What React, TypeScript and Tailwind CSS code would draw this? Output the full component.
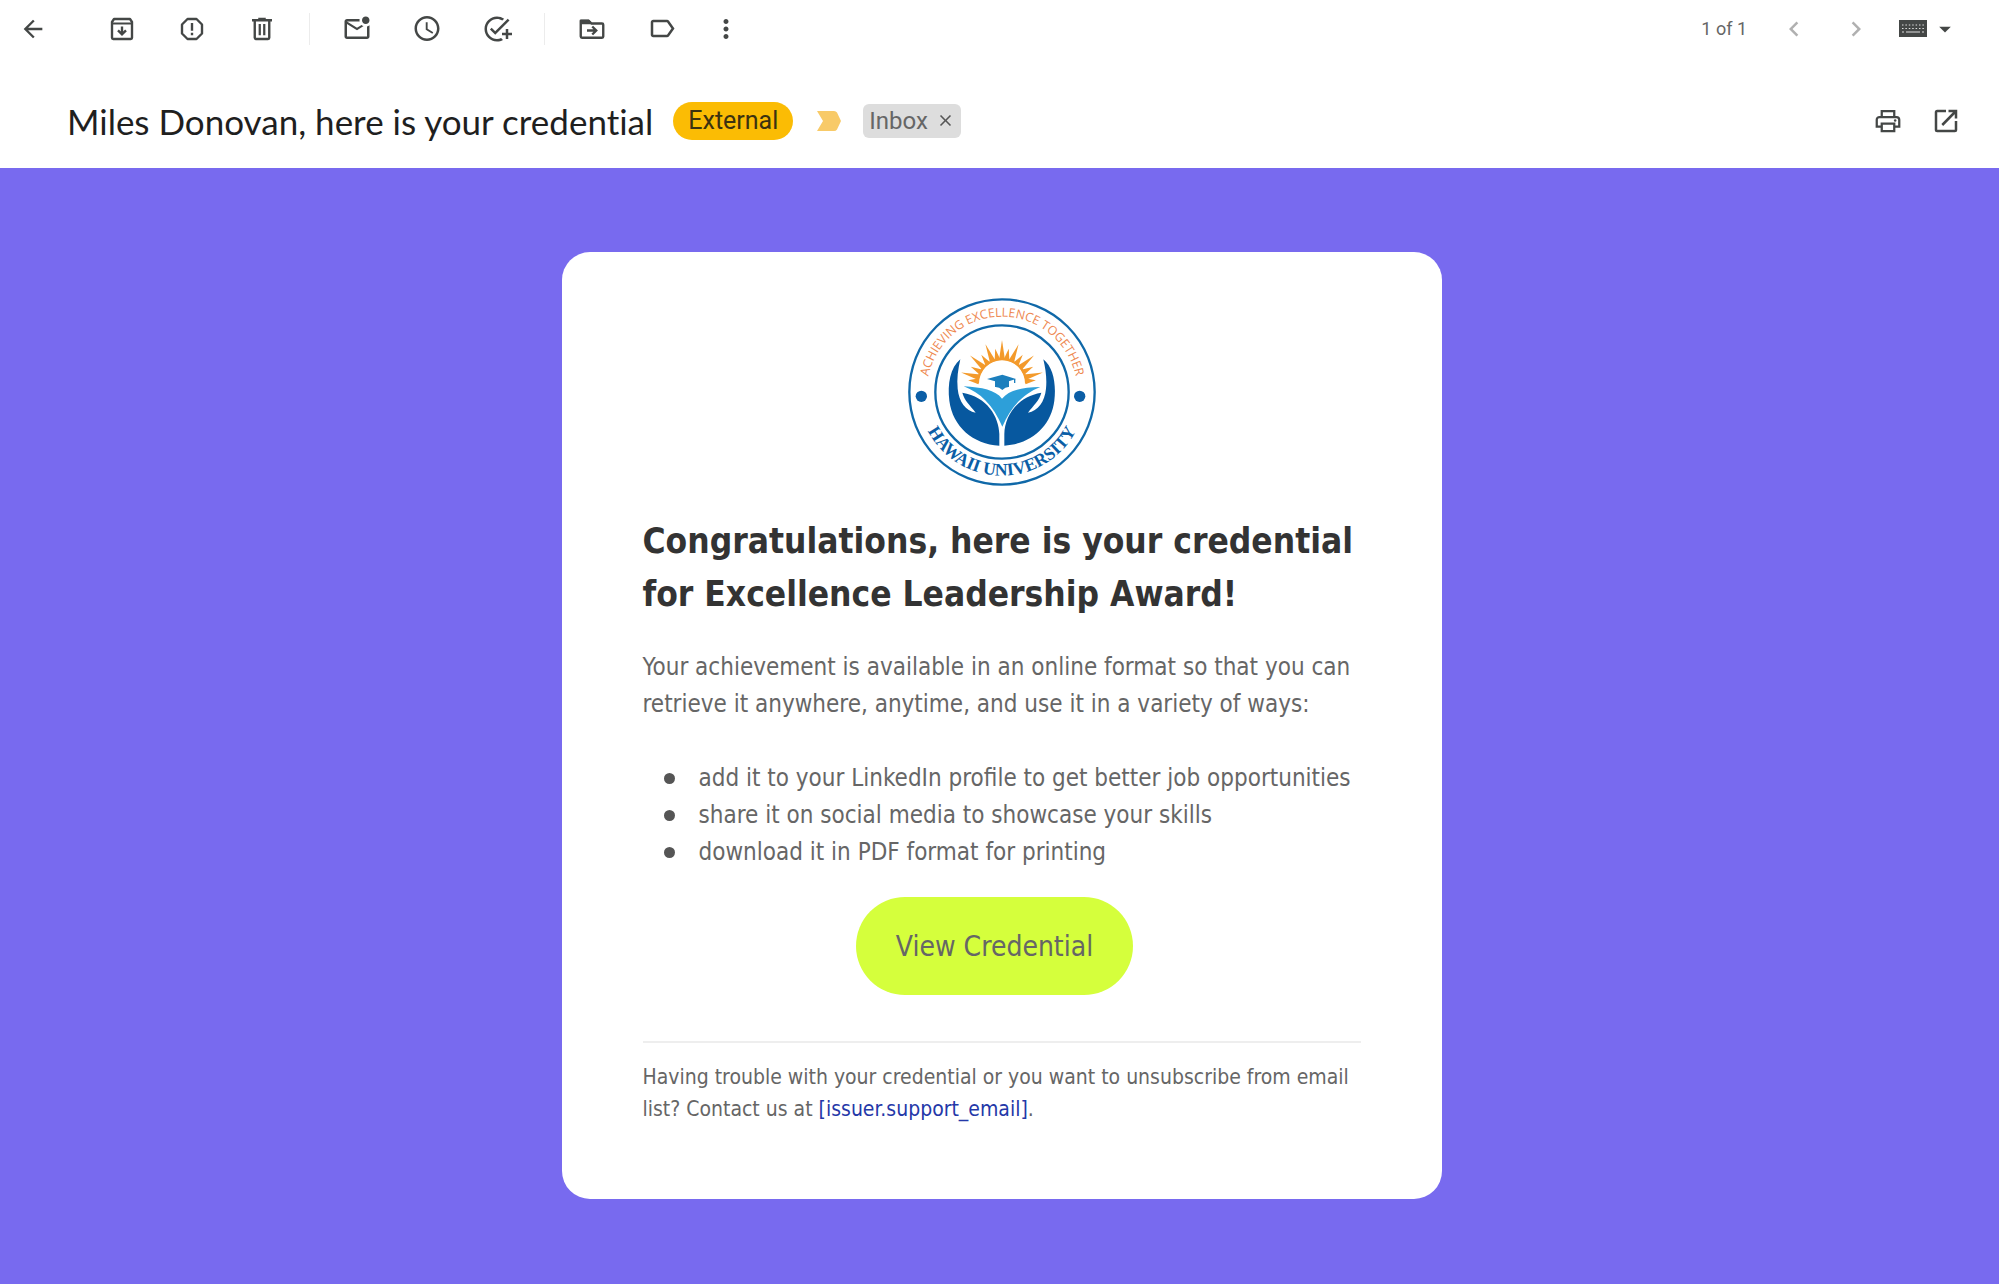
import type { ReactNode } from "react";
import {
  MdAccessTime,
  MdArrowBack,
  MdArrowDropDown,
  MdChevronLeft,
  MdChevronRight,
  MdClose,
  MdLabelOutline,
  MdMoreVert,
  MdOutlineAddTask,
  MdOutlineMarkEmailUnread,
} from "react-icons/md";

const IconButton = ({ label, children }: { label: string; children: ReactNode }) => (
  <button type="button" aria-label={label} className="flex size-[30px] items-center justify-center">
    {children}
  </button>
);

const Divider = () => <div className="mx-8 h-8 w-px bg-[#ececec]" />;

const ArchiveIcon = () => (
  <svg viewBox="0 0 24 24" className="size-[30px]" fill="none" stroke="currentColor" strokeWidth="1.9">
    <path d="M4 6.4 5.6 4h12.8L20 6.4V19a1 1 0 0 1-1 1H5a1 1 0 0 1-1-1Z" strokeLinejoin="round" />
    <path d="M4 7.6h16" strokeWidth="1.6" />
    <path d="M12 10v6M8.8 13.1l3.2 3.2 3.2-3.2" />
  </svg>
);

const SpamIcon = () => (
  <svg viewBox="0 0 24 24" className="size-[30px]" fill="none" stroke="currentColor" strokeWidth="1.9">
    <path d="M8.4 4h7.2L20 8.4v7.2L15.6 20H8.4L4 15.6V8.4Z" strokeLinejoin="round" />
    <path d="M12 7.2v6.2M12 15v2" />
  </svg>
);

const TrashIcon = () => (
  <svg viewBox="0 0 24 24" className="size-[30px]" fill="none" stroke="currentColor" strokeWidth="1.9">
    <path d="M6.2 5.2V19a1 1 0 0 0 1 1h9.6a1 1 0 0 0 1-1V5.2" />
    <path d="M4 5h16M9 3.9h6" />
    <path d="M10.2 8v9M13.8 8v9" strokeWidth="1.8" />
  </svg>
);

const MoveIcon = () => (
  <svg viewBox="0 0 24 24" className="size-[30px]" fill="none" stroke="currentColor" strokeWidth="1.9">
    <path d="M3 5.4h6.4l2.2 2.2H20a1 1 0 0 1 1 1V18a1 1 0 0 1-1 1H4a1 1 0 0 1-1-1Z" strokeLinejoin="round" />
    <path d="M3 4.6h6.6L12.4 8.2H3Z" fill="currentColor" stroke="none" />
    <path d="M8 13.2h7M12.2 10l3.2 3.2-3.2 3.2" />
  </svg>
);

const KeyboardIcon = () => (
  <svg viewBox="0 0 28 17" className="h-[17px] w-7" fill="currentColor">
    <path d="M0 0h28v17H0Z" />
    <g stroke="#ddd" strokeWidth="1.2" fill="none">
      <path d="M3 5h22M3 8.5h22" strokeDasharray="1.5 1.9" />
      <path d="M3 12h2M7 12h14M23 12h2" />
    </g>
  </svg>
);

const PrintIcon = () => (
  <svg viewBox="0 0 24 24" className="size-[30px]" fill="none" stroke="currentColor" strokeWidth="1.8">
    <path d="M7 16.5H3V11a2.2 2.2 0 0 1 2.2-2.2h13.6A2.2 2.2 0 0 1 21 11v5.5h-4" />
    <path d="M7 8.8V4h10v4.8M7 14h10v6H7Z" />
    <circle cx="17.7" cy="11.6" r="1" fill="currentColor" stroke="none" />
  </svg>
);

const OpenIcon = () => (
  <svg viewBox="0 0 24 24" className="size-[30px]" fill="none" stroke="currentColor" strokeWidth="2">
    <path d="M12 4H5a1 1 0 0 0-1 1v14a1 1 0 0 0 1 1h14a1 1 0 0 0 1-1v-7" />
    <path d="M14 4h6v6M20 4 9 15.2" />
  </svg>
);

// angle from vertical, tip radius
const rays = [
  [-85, 102], [-75, 127], [-62, 106], [-49, 127], [-36, 106], [-23, 127], [-11, 106],
  [0, 130],
  [11, 106], [23, 127], [36, 106], [49, 127], [62, 106], [75, 127], [85, 102],
];

const Hand = () => (
  <path d="M210 238C180 262 171 312 177 362C187 440 248 492 327 497L327 462C326 410 290 350 216 338C222 362 240 376 256 398C226 392 206 366 202 326C199 296 203 268 210 238Z" />
);

const Logo = () => (
  <svg viewBox="53 54 564 564" className="size-[188px]" role="img" aria-label="Hawaii University">
    <defs>
      <path id="motto" d="M109 336A226 226 0 0 1 561 336" />
      <path id="name" d="M84 336A251 251 0 0 0 586 336" />
    </defs>
    <g fill="none" stroke="#0f68a8">
      <circle cx="335" cy="336" r="278" strokeWidth="7" />
      <circle cx="335" cy="336" r="200" strokeWidth="7" />
    </g>
    <g fill="#0b5ea6">
      <circle cx="93" cy="349" r="17" />
      <circle cx="568" cy="349" r="17" />
    </g>
    <g fill="#f39a2b">
      {rays.map(([angle, tip]) => (
        <path key={angle} d={`M-9 -70L0 -${tip}L9 -70Z`} transform={`translate(335 310) rotate(${angle})`} />
      ))}
      <path d="M259 310A76 76 0 0 1 411 310H404A69 69 0 0 0 266 310Z" />
    </g>
    <path d="M220 319C275 322 315 330 335 356C355 330 395 322 450 321C402 340 365 375 336 440C308 375 270 338 220 319Z" fill="#2d9fd9" />
    <g fill="#1c7fbd">
      <path d="M290 297L336 284L377 297L336 310Z" />
      <path d="M314 300H356V321Q346 320 336 330Q326 320 314 321Z" />
      <path d="M371 297h4v12h-4Z" />
    </g>
    <g fill="#07589f">
      <Hand />
      <g transform="translate(669 0) scale(-1 1)">
        <Hand />
      </g>
    </g>
    <text className="fill-[#ee8850] font-['Open_Sans',sans-serif] text-[37px]" textAnchor="middle">
      <textPath href="#motto" startOffset="50%">ACHIEVING EXCELLENCE TOGETHER</textPath>
    </text>
    <text className="fill-[#0b5ea6] font-['Liberation_Serif',serif] text-[53px] font-bold" textAnchor="middle">
      <textPath href="#name" startOffset="50%">HAWAII UNIVERSITY</textPath>
    </text>
  </svg>
);

const Toolbar = () => (
  <div className="flex h-[57px] items-center justify-between pr-10 pl-[18px] text-[#444746]">
    <div className="flex items-center">
      <IconButton label="Back"><MdArrowBack size={28} /></IconButton>
      <div className="ml-[59px] flex items-center gap-10">
        <IconButton label="Archive"><ArchiveIcon /></IconButton>
        <IconButton label="Report spam"><SpamIcon /></IconButton>
        <IconButton label="Delete"><TrashIcon /></IconButton>
      </div>
      <Divider />
      <div className="flex items-center gap-10">
        <IconButton label="Mark as unread"><MdOutlineMarkEmailUnread size={30} /></IconButton>
        <IconButton label="Snooze"><MdAccessTime size={31} /></IconButton>
        <IconButton label="Add to tasks"><MdOutlineAddTask size={30} /></IconButton>
      </div>
      <Divider />
      <div className="flex items-center gap-10">
        <IconButton label="Move to"><MoveIcon /></IconButton>
        <IconButton label="Labels"><MdLabelOutline size={31} /></IconButton>
      </div>
      <div className="ml-[34px]">
        <IconButton label="More"><MdMoreVert size={30} /></IconButton>
      </div>
    </div>
    <div className="flex items-center">
      <span className="mr-8 font-[Roboto,sans-serif] text-lg text-[#666]">1 of 1</span>
      <div className="mr-7 flex gap-8 text-[#b0b0b0]">
        <IconButton label="Newer"><MdChevronLeft size={30} /></IconButton>
        <IconButton label="Older"><MdChevronRight size={30} /></IconButton>
      </div>
      <button type="button" aria-label="Input tools" className="flex items-center gap-1">
        <KeyboardIcon />
        <MdArrowDropDown size={28} />
      </button>
    </div>
  </div>
);

const SubjectBar = () => (
  <div className="flex h-[111px] items-center justify-between pt-4 pr-[38px] pl-[67px]">
    <div className="flex items-center">
      <h1 className="font-[Lato,sans-serif] text-[35px] leading-10 text-[#1f1f1f] [font-variant-ligatures:none]">
        Miles Donovan, here is your credential
      </h1>
      <span className="ml-5 rounded-full bg-[#fbbc04] px-[15px] font-[Roboto,sans-serif] text-[25px] leading-[38px] text-[#3c3210]">
        External
      </span>
      <svg viewBox="0 0 24 20" className="ml-6 h-5 w-6" fill="#f8ca68" role="img" aria-label="Important">
        <path d="M0 0h17q2 0 3 1.5L24 10l-4 8.5q-1 1.5-3 1.5H0l6-10Z" />
      </svg>
      <span className="ml-[22px] flex items-center gap-2 rounded-md bg-[#ddd] px-1.5 font-[Roboto,sans-serif] text-2xl leading-[34px] text-[#666]">
        Inbox
        <button type="button" aria-label="Remove label Inbox" className="text-[#555]">
          <MdClose size={19} />
        </button>
      </span>
    </div>
    <div className="flex gap-7 text-[#444746]">
      <IconButton label="Print"><PrintIcon /></IconButton>
      <IconButton label="Open in new window"><OpenIcon /></IconButton>
    </div>
  </div>
);

const perks = [
  "add it to your LinkedIn profile to get better job opportunities",
  "share it on social media to showcase your skills",
  "download it in PDF format for printing",
];

const App = () => {
  return (
    <div className="flex min-h-screen flex-col bg-white">
      <header>
        <Toolbar />
        <SubjectBar />
      </header>
      <main className="flex-1 bg-[#786aef] pt-[84px] pr-6 pb-[84px] pl-7">
        <article className="mx-auto w-full max-w-[880px] rounded-[28px] bg-white px-[81px] pt-[46px] pb-[74px] font-['DejaVu_Sans_Condensed','Noto_Sans',sans-serif] text-[#666]">
          <div className="flex justify-center">
            <Logo />
          </div>
          <h2 className="mt-[29px] text-[35px] leading-[53px] font-bold text-[#333]">
            Congratulations, here is your credential for Excellence Leadership Award!
          </h2>
          <p className="mt-7 text-2xl leading-[37px]">
            Your achievement is available in an online format so that you can retrieve it anywhere, anytime, and use it
            in a variety of ways:
          </p>
          <ul className="mt-[37px] pl-[21px] text-2xl leading-[37px]">
            {perks.map((perk) => (
              <li
                key={perk}
                className="flex items-center gap-6 before:size-[11px] before:shrink-0 before:rounded-full before:bg-[#555]"
              >
                {perk}
              </li>
            ))}
          </ul>
          <div className="mt-[26px] flex justify-center pr-3.5">
            <button
              type="button"
              className="rounded-full bg-[#d5ff3c] px-10 pt-[31px] pb-[29px] text-[28px] leading-[38px]"
            >
              View Credential
            </button>
          </div>
          <hr className="mt-[46px] border-t-2 border-[#eee]" />
          <p className="mt-[18px] text-[21px] leading-8">
            Having trouble with your credential or you want to unsubscribe from email list? Contact us at{" "}
            <a href="#support" className="text-[#2438a8]">[issuer.support_email]</a>.
          </p>
        </article>
      </main>
    </div>
  );
};

export default App;
